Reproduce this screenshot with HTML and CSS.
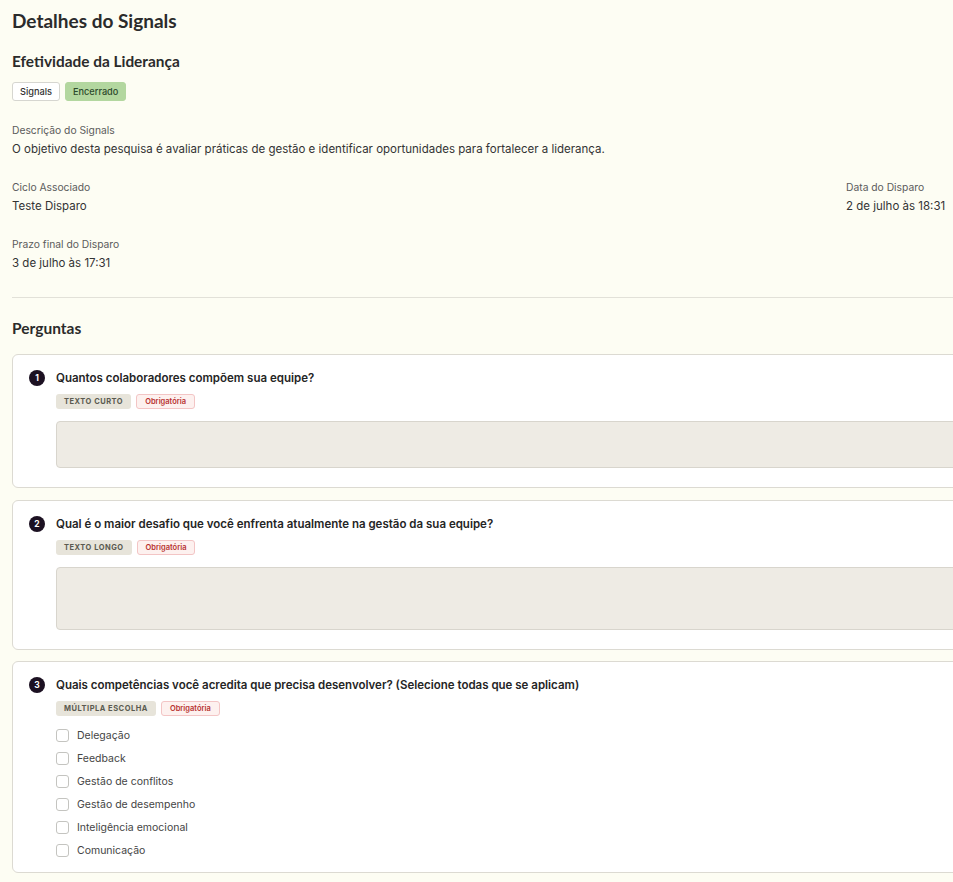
FILE: index.html
```html
<!DOCTYPE html>
<html lang="pt-BR">
<head>
    <meta charset="UTF-8">
    <meta name="viewport" content="width=device-width, initial-scale=1.0">
    <title>Detalhes do Signals</title>
    <link rel="stylesheet" href="styles.css">
</head>
<body>
    <div class="page">
        <h1 class="page-title">Detalhes do Signals</h1>

        <h2 class="signal-name">Efetividade da Liderança</h2>
        <div class="badges">
            <span class="badge">Signals</span>
            <span class="badge badge-closed">Encerrado</span>
        </div>

        <div class="field">
            <div class="field-label">Descrição do Signals</div>
            <div class="field-value">O objetivo desta pesquisa é avaliar práticas de gestão e identificar oportunidades para fortalecer a liderança.</div>
        </div>

        <div class="info-grid">
            <div class="field">
                <div class="field-label">Ciclo Associado</div>
                <div class="field-value">Teste Disparo</div>
            </div>
            <div class="field">
                <div class="field-label">Data do Disparo</div>
                <div class="field-value">2 de julho às 18:31</div>
            </div>
            <div class="field">
                <div class="field-label">Prazo final do Disparo</div>
                <div class="field-value">3 de julho às 17:31</div>
            </div>
        </div>

        <hr class="divider">

        <h2 class="section-title">Perguntas</h2>

        <div class="questions">
            <!-- Pergunta 1 -->
            <div class="question-card">
                <div class="question-head">
                    <span class="question-number">1</span>
                    <span class="question-text">Quantos colaboradores compõem sua equipe?</span>
                </div>
                <div class="question-body">
                    <div class="tags">
                        <span class="tag tag-type">Texto curto</span>
                        <span class="tag tag-required">Obrigatória</span>
                    </div>
                    <div class="answer-box"></div>
                </div>
            </div>

            <!-- Pergunta 2 -->
            <div class="question-card">
                <div class="question-head">
                    <span class="question-number">2</span>
                    <span class="question-text">Qual é o maior desafio que você enfrenta atualmente na gestão da sua equipe?</span>
                </div>
                <div class="question-body">
                    <div class="tags">
                        <span class="tag tag-type">Texto longo</span>
                        <span class="tag tag-required">Obrigatória</span>
                    </div>
                    <div class="answer-box answer-long"></div>
                </div>
            </div>

            <!-- Pergunta 3 -->
            <div class="question-card question-options">
                <div class="question-head">
                    <span class="question-number">3</span>
                    <span class="question-text">Quais competências você acredita que precisa desenvolver? (Selecione todas que se aplicam)</span>
                </div>
                <div class="question-body">
                    <div class="tags">
                        <span class="tag tag-type">Múltipla escolha</span>
                        <span class="tag tag-required">Obrigatória</span>
                    </div>
                    <ul class="option-list">
                        <li class="option"><span class="checkbox"></span>Delegação</li>
                        <li class="option"><span class="checkbox"></span>Feedback</li>
                        <li class="option"><span class="checkbox"></span>Gestão de conflitos</li>
                        <li class="option"><span class="checkbox"></span>Gestão de desempenho</li>
                        <li class="option"><span class="checkbox"></span>Inteligência emocional</li>
                        <li class="option"><span class="checkbox"></span>Comunicação</li>
                    </ul>
                </div>
            </div>
        </div>
    </div>
</body>
</html>
```

FILE: styles.css
```css
* {
    box-sizing: border-box;
    margin: 0;
    padding: 0;
}

body {
    font-family: Inter, 'Noto Sans', sans-serif;
    background: #fdfdf3;
    color: #333;
    overflow: hidden;
}

.page {
    width: 1040px;
    padding: 9px 12px 40px;
}

.page-title {
    font-family: Lato, sans-serif;
    font-size: 19px;
    line-height: 24px;
    font-weight: 700;
    color: #2b2b2b;
}

.signal-name {
    font-family: Lato, sans-serif;
    font-size: 15.4px;
    line-height: 20px;
    font-weight: 700;
    color: #2b2b2b;
    margin-top: 18px;
}

.badges {
    display: flex;
    gap: 5px;
    margin-top: 11px;
}

.badge {
    display: inline-flex;
    align-items: center;
    height: 19px;
    padding: 0 7px;
    font-size: 9.2px;
    font-weight: 500;
    color: #333;
    background: #fff;
    border: 1px solid #d6d6d0;
    border-radius: 3px;
}

.badge-closed {
    background: #b3d79f;
    border-color: #b3d79f;
    color: #2d4a2b;
}

.field {
    margin-top: 21px;
}

.field-label {
    font-size: 10.3px;
    line-height: 16px;
    color: #5b5b5b;
}

.field-value {
    font-size: 11.5px;
    line-height: 18px;
    color: #333;
    margin-top: 2px;
}

.info-grid {
    display: grid;
    grid-template-columns: 1fr 182px;
}

.info-grid .field {
    margin-top: 21px;
}

.divider {
    border: none;
    border-top: 1px solid #e2e1d8;
    margin-top: 25px;
}

.section-title {
    font-family: Lato, sans-serif;
    font-size: 15.5px;
    line-height: 20px;
    font-weight: 700;
    color: #2b2b2b;
    margin-top: 20px;
}

.questions {
    display: flex;
    flex-direction: column;
    gap: 11.5px;
    margin-top: 16px;
}

.question-card {
    background: #fff;
    border: 1px solid #dcdad2;
    border-radius: 6px;
    padding: 15px 16px 19px;
}

.question-options {
    padding-bottom: 10px;
}

.question-head {
    display: flex;
    align-items: center;
    gap: 11px;
}

.question-number {
    flex: none;
    width: 16px;
    height: 16px;
    border-radius: 50%;
    background: #1c1122;
    color: #fff;
    font-size: 8.5px;
    font-weight: 700;
    display: flex;
    align-items: center;
    justify-content: center;
}

.question-text {
    font-size: 11.5px;
    line-height: 16px;
    font-weight: 600;
    color: #252525;
}

.question-body {
    padding-left: 27px;
}

.tags {
    display: flex;
    gap: 5px;
    margin-top: 8px;
}

.tag {
    display: inline-flex;
    align-items: center;
    height: 15px;
    padding: 0 8px;
    font-size: 7.5px;
    font-weight: 600;
    border-radius: 3px;
}

.tag-type {
    background: #e7e4da;
    color: #5a5a50;
    text-transform: uppercase;
    letter-spacing: 0.5px;
    font-weight: 700;
}

.tag-required {
    background: #fdf1ef;
    border: 1px solid #f3c5c5;
    color: #b8322f;
}

.answer-box {
    height: 47px;
    margin-top: 12px;
    background: #eeebe4;
    border: 1px solid #d8d5cd;
    border-radius: 4px;
}

.answer-long {
    height: 63px;
}

.option-list {
    list-style: none;
    margin-top: 8px;
}

.option {
    display: flex;
    align-items: center;
    gap: 8px;
    height: 23px;
    font-size: 10.5px;
    color: #444;
}

.checkbox {
    width: 13px;
    height: 13px;
    border: 1px solid #c4c4c0;
    border-radius: 3px;
    background: #fff;
}
```
